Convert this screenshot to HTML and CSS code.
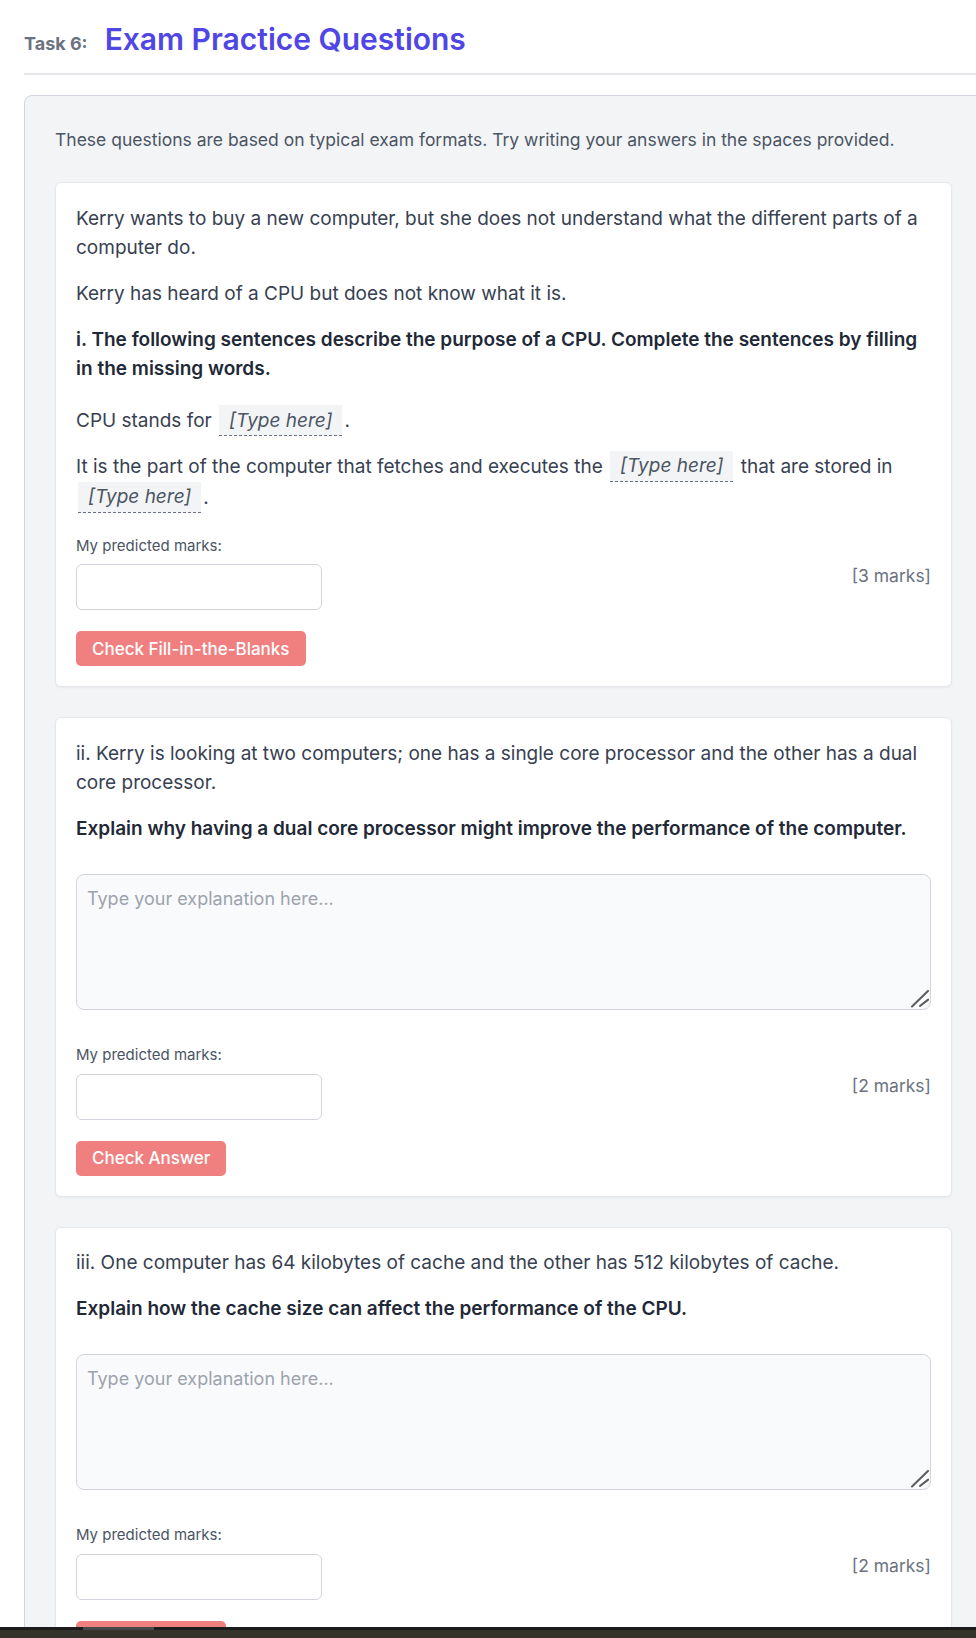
FILE: index.html
```html
<!DOCTYPE html>
<html lang="en">
<head>
<meta charset="utf-8">
<title>Task 6: Exam Practice Questions</title>
<link rel="stylesheet" href="styles.css">
</head>
<body>
<div class="page">
  <header class="task-header">
    <span class="task-label">Task 6:</span>
    <h1 class="task-title">Exam Practice Questions</h1>
  </header>

  <section class="panel">
    <p class="intro">These questions are based on typical exam formats. Try writing your answers in the spaces provided.</p>

    <div class="card">
      <p>Kerry wants to buy a new computer, but she does not understand what the different parts of a computer do.</p>
      <p>Kerry has heard of a CPU but does not know what it is.</p>
      <p class="q-bold">i. The following sentences describe the purpose of a CPU. Complete the sentences by filling in the missing words.</p>
      <div class="blanks">
        <p>CPU stands for <span class="blank">[Type here]</span>.</p>
        <p>It is the part of the computer that fetches and executes the <span class="blank">[Type here]</span> that are stored in <span class="blank">[Type here]</span>.</p>
      </div>
      <div class="marks-row">
        <div class="marks-field">
          <label class="marks-label">My predicted marks:</label>
          <input class="marks-input" type="text">
        </div>
        <span class="marks">[3 marks]</span>
      </div>
      <button class="check" type="button">Check Fill-in-the-Blanks</button>
    </div>

    <div class="card">
      <p>ii. Kerry is looking at two computers; one has a single core processor and the other has a dual core processor.</p>
      <p class="q-bold">Explain why having a dual core processor might improve the performance of the computer.</p>
      <div class="answer-wrap">
        <textarea class="answer" placeholder="Type your explanation here..."></textarea>
        <svg class="grip" width="18" height="18" viewBox="0 0 18 18" aria-hidden="true">
          <path d="M1 16.5 L17 1" />
          <path d="M9 16 L17.2 9.6" />
        </svg>
      </div>
      <div class="marks-row">
        <div class="marks-field">
          <label class="marks-label">My predicted marks:</label>
          <input class="marks-input" type="text">
        </div>
        <span class="marks">[2 marks]</span>
      </div>
      <button class="check" type="button">Check Answer</button>
    </div>

    <div class="card">
      <p>iii. One computer has 64 kilobytes of cache and the other has 512 kilobytes of cache.</p>
      <p class="q-bold">Explain how the cache size can affect the performance of the CPU.</p>
      <div class="answer-wrap">
        <textarea class="answer" placeholder="Type your explanation here..."></textarea>
        <svg class="grip" width="18" height="18" viewBox="0 0 18 18" aria-hidden="true">
          <path d="M1 16.5 L17 1" />
          <path d="M9 16 L17.2 9.6" />
        </svg>
      </div>
      <div class="marks-row">
        <div class="marks-field">
          <label class="marks-label">My predicted marks:</label>
          <input class="marks-input" type="text">
        </div>
        <span class="marks">[2 marks]</span>
      </div>
      <button class="check" type="button">Check Answer</button>
    </div>
  </section>
</div>
<div class="screen-bar"><span class="screen-bar-thumb"></span></div>
</body>
</html>
```

FILE: styles.css
```css
* { box-sizing: border-box; }

html, body {
  margin: 0;
  overflow-x: hidden;
}

body {
  background: #ffffff;
  font-family: Inter, "Noto Sans", sans-serif;
  color: #374151;
}

.page {
  width: 983px;
  padding: 21px 0 40px 24px;
}

.task-header {
  display: flex;
  align-items: baseline;
  gap: 17px;
  padding-bottom: 16px;
  border-bottom: 2px solid #e5e7eb;
  margin-bottom: 20px;
}

.task-label {
  font-size: 18px;
  font-weight: 700;
  color: #6b7280;
}

.task-title {
  margin: 0;
  font-size: 30px;
  line-height: 36px;
  font-weight: 600;
  color: #4f46e5;
}

.panel {
  background: #f3f4f6;
  border: 1px solid #d1d5db;
  border-radius: 8px;
  padding: 30px;
}

.intro {
  margin: 0 0 28px;
  font-size: 17.5px;
  line-height: 28px;
  color: #4b5563;
}

.card {
  background: #ffffff;
  border: 1px solid #e5e7eb;
  border-radius: 6px;
  box-shadow: 0 1px 2px rgba(0, 0, 0, 0.05);
  padding: 20.5px 20px 20px;
  margin-bottom: 30px;
  font-size: 19px;
  line-height: 29.7px;
  color: #374151;
}

.card p {
  margin: 0 0 16px;
}

.card .q-bold {
  font-weight: 600;
  color: #1f2937;
}

.blanks {
  margin-top: 21px;
}

.blanks p {
  margin-bottom: 14.5px;
}

.blank {
  display: inline-block;
  line-height: normal;
  padding: 3.5px 10px;
  margin: 0 2px;
  background: #f3f4f6;
  border-bottom: 1px dashed #6b7280;
  font-style: italic;
  color: #4b5563;
}

.answer-wrap {
  position: relative;
  margin: 30.5px 0 34px;
}

.answer {
  display: block;
  width: 100%;
  height: 136px;
  padding: 10px 10px;
  background: #f9fafb;
  border: 1px solid #d1d5db;
  border-radius: 8px;
  font-family: inherit;
  font-size: 18px;
  line-height: 1.5;
  color: #374151;
  resize: none;
}

.answer::placeholder {
  color: #9ca3af;
}

.grip {
  position: absolute;
  right: 2px;
  bottom: 2px;
  fill: none;
  stroke: #5b5b5b;
  stroke-width: 2;
  stroke-linecap: round;
}

.marks-row {
  display: flex;
  justify-content: space-between;
  align-items: center;
  margin-top: 22px;
}

.marks-label {
  display: block;
  font-size: 15px;
  line-height: 22.5px;
  color: #4b5563;
  margin-bottom: 7px;
}

.marks-input {
  display: block;
  width: 246px;
  height: 46px;
  border: 1px solid #d1d5db;
  border-radius: 6px;
  background: #ffffff;
}

.marks {
  font-size: 17.5px;
  line-height: 28px;
  color: #6b7280;
  margin-top: 8px;
}

.check {
  display: block;
  margin-top: 21px;
  height: 35px;
  padding: 0 16px;
  border: 0;
  border-radius: 5px;
  background: #f08080;
  color: #ffffff;
  font-family: inherit;
  font-size: 17px;
  font-weight: 500;
}

.screen-bar {
  position: fixed;
  left: 0;
  right: 0;
  bottom: 0;
  height: 11px;
  background: #33332b;
  border-top: 3px solid #1c1c1c;
}

.screen-bar-thumb {
  position: absolute;
  left: 83px;
  top: -3px;
  width: 71px;
  height: 3px;
  background: #474747;
}
```
